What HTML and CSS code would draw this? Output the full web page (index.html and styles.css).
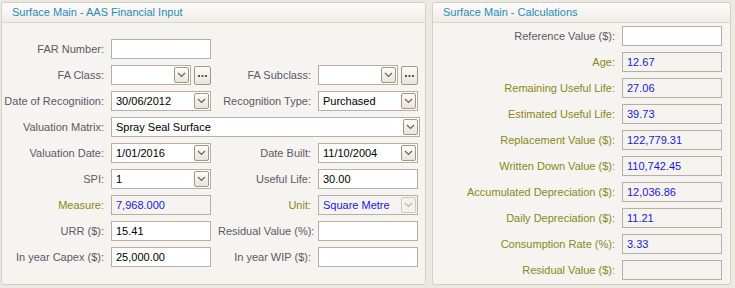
FILE: index.html
```html
<!DOCTYPE html>
<html lang="en">
<head>
  <meta charset="UTF-8" />
  <title>Surface Main</title>
  <link rel="stylesheet" href="styles.css">
</head>
<body>
  <div class="screen">
    <!-- INPUT PANEL -->
    <section class="panel panel-input">
      <div class="panel-head">Surface Main - AAS Financial Input</div>
      <div class="form-grid">
        <label class="lbl">FAR Number:</label>
        <div class="field"></div>
        <span></span><span></span>

        <label class="lbl">FA Class:</label>
        <div class="pick">
          <div class="field combo"><span class="val"></span><span class="drop"><svg width="9" height="6" viewBox="0 0 9 6"><path d="M1 1 L4.5 4.5 L8 1" fill="none" stroke="#6b6258" stroke-width="1.2"/></svg></span></div>
          <span class="dots"><svg width="9" height="3" viewBox="0 0 9 3"><rect x="0" y="1" width="2" height="2" fill="#5e554c"/><rect x="3.5" y="1" width="2" height="2" fill="#5e554c"/><rect x="7" y="1" width="2" height="2" fill="#5e554c"/></svg></span>
        </div>
        <label class="lbl">FA Subclass:</label>
        <div class="pick">
          <div class="field combo"><span class="val"></span><span class="drop"><svg width="9" height="6" viewBox="0 0 9 6"><path d="M1 1 L4.5 4.5 L8 1" fill="none" stroke="#6b6258" stroke-width="1.2"/></svg></span></div>
          <span class="dots"><svg width="9" height="3" viewBox="0 0 9 3"><rect x="0" y="1" width="2" height="2" fill="#5e554c"/><rect x="3.5" y="1" width="2" height="2" fill="#5e554c"/><rect x="7" y="1" width="2" height="2" fill="#5e554c"/></svg></span>
        </div>

        <label class="lbl">Date of Recognition:</label>
        <div class="field combo"><span class="val">30/06/2012</span><span class="drop"><svg width="9" height="6" viewBox="0 0 9 6"><path d="M1 1 L4.5 4.5 L8 1" fill="none" stroke="#6b6258" stroke-width="1.2"/></svg></span></div>
        <label class="lbl">Recognition Type:</label>
        <div class="field combo"><span class="val">Purchased</span><span class="drop"><svg width="9" height="6" viewBox="0 0 9 6"><path d="M1 1 L4.5 4.5 L8 1" fill="none" stroke="#6b6258" stroke-width="1.2"/></svg></span></div>

        <label class="lbl">Valuation Matrix:</label>
        <div class="field combo wide"><span class="val">Spray Seal Surface</span><span class="drop"><svg width="9" height="6" viewBox="0 0 9 6"><path d="M1 1 L4.5 4.5 L8 1" fill="none" stroke="#6b6258" stroke-width="1.2"/></svg></span></div>

        <label class="lbl">Valuation Date:</label>
        <div class="field combo"><span class="val">1/01/2016</span><span class="drop"><svg width="9" height="6" viewBox="0 0 9 6"><path d="M1 1 L4.5 4.5 L8 1" fill="none" stroke="#6b6258" stroke-width="1.2"/></svg></span></div>
        <label class="lbl">Date Built:</label>
        <div class="field combo"><span class="val">11/10/2004</span><span class="drop"><svg width="9" height="6" viewBox="0 0 9 6"><path d="M1 1 L4.5 4.5 L8 1" fill="none" stroke="#6b6258" stroke-width="1.2"/></svg></span></div>

        <label class="lbl">SPI:</label>
        <div class="field combo"><span class="val">1</span><span class="drop"><svg width="9" height="6" viewBox="0 0 9 6"><path d="M1 1 L4.5 4.5 L8 1" fill="none" stroke="#6b6258" stroke-width="1.2"/></svg></span></div>
        <label class="lbl">Useful Life:</label>
        <div class="field">30.00</div>

        <label class="lbl ro">Measure:</label>
        <div class="field readonly">7,968.000</div>
        <label class="lbl ro">Unit:</label>
        <div class="field combo readonly"><span class="val">Square Metre</span><span class="drop off"><svg width="9" height="6" viewBox="0 0 9 6"><path d="M1 1 L4.5 4.5 L8 1" fill="none" stroke="#b8b2aa" stroke-width="1.2"/></svg></span></div>

        <label class="lbl">URR ($):</label>
        <div class="field">15.41</div>
        <label class="lbl">Residual Value (%):</label>
        <div class="field"></div>

        <label class="lbl">In year Capex ($):</label>
        <div class="field">25,000.00</div>
        <label class="lbl">In year WIP ($):</label>
        <div class="field"></div>
      </div>
    </section>

    <!-- CALCULATIONS PANEL -->
    <section class="panel panel-calc">
      <div class="panel-head">Surface Main - Calculations</div>
      <div class="calc-grid">
        <label class="lbl">Reference Value ($):</label><div class="field"></div>
        <label class="lbl ro">Age:</label><div class="field readonly">12.67</div>
        <label class="lbl ro">Remaining Useful Life:</label><div class="field readonly">27.06</div>
        <label class="lbl ro">Estimated Useful Life:</label><div class="field readonly">39.73</div>
        <label class="lbl ro">Replacement Value ($):</label><div class="field readonly">122,779.31</div>
        <label class="lbl ro">Written Down Value ($):</label><div class="field readonly">110,742.45</div>
        <label class="lbl ro">Accumulated Depreciation ($):</label><div class="field readonly">12,036.86</div>
        <label class="lbl ro">Daily Depreciation ($):</label><div class="field readonly">11.21</div>
        <label class="lbl ro">Consumption Rate (%):</label><div class="field readonly">3.33</div>
        <label class="lbl ro">Residual Value ($):</label><div class="field readonly"></div>
      </div>
    </section>
  </div>
</body>
</html>
```

FILE: styles.css
```css
html, body {
  margin: 0;
  padding: 0;
  background: #ece9e2;
  font-family: 'Liberation Sans', Arial, sans-serif;
  font-size: 11px;
  color: #000;
}
.screen {
  display: flex;
  gap: 6px;
  padding: 2px 0 0 1px;
}
.panel {
  box-sizing: border-box;
  height: 283px;
  background: #f6f4f0;
  border: 1px solid #d6d0c4;
  border-radius: 3px;
}
.panel-input { width: 425px; }
.panel-calc { width: 299px; }
.panel-head {
  height: 19px;
  line-height: 19px;
  padding-left: 10px;
  font-size: 11px;
  color: #1e8cc0;
  background: linear-gradient(#fdfcfb, #f0ede7);
  border-bottom: 1px solid #dcd6cb;
  border-radius: 3px 3px 0 0;
}
/* -- FORM GRID -- */
.form-grid {
  display: grid;
  grid-template-columns: 102px 100px 93px 100px;
  column-gap: 7px;
  row-gap: 6px;
  padding: 16px 0 0 0;
}
.calc-grid {
  display: grid;
  grid-template-columns: 182px 100px;
  column-gap: 7px;
  row-gap: 6px;
  padding: 3px 0 0 0;
}
.lbl {
  text-align: right;
  line-height: 20px;
  white-space: nowrap;
  color: #5f5667;
}
.lbl.ro { color: #8a8719; }
.field {
  box-sizing: border-box;
  height: 20px;
  line-height: 18px;
  background: #fff;
  border: 1px solid #b9aea3;
  padding: 0 4px;
  white-space: nowrap;
  overflow: hidden;
}
.field.readonly {
  background: #f6f4f0;
  color: #1a14f0;
}
.field.combo {
  display: flex;
  align-items: center;
  padding: 0 1px 0 4px;
}
.field.wide {
  grid-column: 2 / span 3;
  margin-right: -2px;
}
.val { flex: 1; }
.drop {
  box-sizing: border-box;
  width: 15px;
  height: 16px;
  display: flex;
  align-items: center;
  justify-content: center;
  border: 1px solid #a2968a;
  border-radius: 2px;
  background: linear-gradient(#fdfcfa, #e9e4da);
}
.drop.off {
  border-color: #cfc9c0;
  background: #f4f2ee;
}
.pick {
  display: flex;
  align-items: center;
  gap: 3px;
}
.pick .field { flex: 1; }
.dots {
  box-sizing: border-box;
  width: 17px;
  height: 19px;
  display: flex;
  align-items: center;
  justify-content: center;
  border: 1px solid #a2968a;
  border-radius: 2px;
  background: linear-gradient(#fdfcfa, #e9e4da);
}
```
